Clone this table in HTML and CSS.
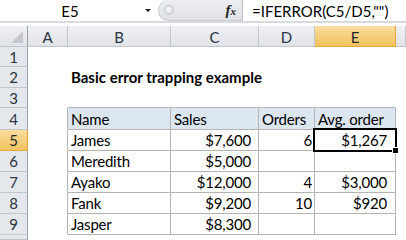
FILE: index.html
```html
<!DOCTYPE html>
<html lang="en">
<head>
    <meta charset="UTF-8">
    <meta name="viewport" content="width=device-width, initial-scale=1.0">
    <title>Basic error trapping example</title>
    <link rel="stylesheet" href="styles.css">
</head>
<body>
    <!-- Name box + formula bar -->
    <div class="formula-bar">
        <div class="name-box">
            <span class="cell-ref">E5</span>
            <span class="caret"></span>
        </div>
        <div class="fx-area">
            <span class="grip"></span>
            <span class="fx"><i>f</i><i class="x">x</i></span>
        </div>
        <div class="formula">=IFERROR(C5/D5,"")</div>
    </div>
    <div class="bar-gap"></div>

    <!-- Worksheet grid -->
    <div class="sheet">
        <div class="hd corner"><span class="corner-mark"></span></div>
        <div class="hd col">A</div>
        <div class="hd col">B</div>
        <div class="hd col">C</div>
        <div class="hd col">D</div>
        <div class="hd col sel">E</div>
        <div class="hd col"></div>

        <div class="hd row">1</div>
        <div class="c"></div><div class="c"></div><div class="c"></div><div class="c"></div><div class="c"></div><div class="c"></div>

        <div class="hd row">2</div>
        <div class="c"></div>
        <div class="c title">Basic error trapping example</div>
        <div class="c"></div><div class="c"></div><div class="c"></div><div class="c"></div>

        <div class="hd row">3</div>
        <div class="c"></div>
        <div class="c tt"></div><div class="c tt"></div><div class="c tt"></div><div class="c tt"></div>
        <div class="c"></div>

        <div class="hd row">4</div>
        <div class="c tl"></div>
        <div class="c t th">Name</div>
        <div class="c t th">Sales</div>
        <div class="c t th">Orders</div>
        <div class="c t th">Avg. order</div>
        <div class="c"></div>

        <div class="hd row sel">5</div>
        <div class="c tl"></div>
        <div class="c t">James</div>
        <div class="c t num money">$7,600</div>
        <div class="c t num">6</div>
        <div class="c t num avg active">$1,267</div>
        <div class="c"></div>

        <div class="hd row">6</div>
        <div class="c tl"></div>
        <div class="c t">Meredith</div>
        <div class="c t num money">$5,000</div>
        <div class="c t num"></div>
        <div class="c t num avg"></div>
        <div class="c"></div>

        <div class="hd row">7</div>
        <div class="c tl"></div>
        <div class="c t">Ayako</div>
        <div class="c t num money">$12,000</div>
        <div class="c t num">4</div>
        <div class="c t num avg">$3,000</div>
        <div class="c"></div>

        <div class="hd row">8</div>
        <div class="c tl"></div>
        <div class="c t">Fank</div>
        <div class="c t num money">$9,200</div>
        <div class="c t num">10</div>
        <div class="c t num avg">$920</div>
        <div class="c"></div>

        <div class="hd row">9</div>
        <div class="c tl"></div>
        <div class="c t">Jasper</div>
        <div class="c t num money">$8,300</div>
        <div class="c t num"></div>
        <div class="c t num avg"></div>
        <div class="c"></div>

        <!-- row 10 is only a sliver at the bottom edge -->
        <div class="hd row"></div>
        <div class="c"></div><div class="c"></div><div class="c"></div><div class="c"></div><div class="c"></div><div class="c"></div>
    </div>
</body>
</html>
```

FILE: styles.css
```css
body {
    margin: 0;
    width: 406px;
    height: 240px;
    overflow: hidden;
    background: #fff;
    font-family: Lato, "Liberation Sans", sans-serif;
    font-size: 15px;
    color: #000;
}

/* formula bar */
.formula-bar {
    display: flex;
    height: 21px;
    background: #fff;
}
.name-box {
    width: 158px;
    display: flex;
    align-items: center;
    position: relative;
}
.cell-ref {
    width: 140px;
    text-align: center;
}
.caret {
    width: 0;
    height: 0;
    border-left: 3px solid transparent;
    border-right: 3px solid transparent;
    border-top: 3px solid #222;
    margin-left: 5px;
}
.fx-area {
    width: 85px;
    display: flex;
    align-items: center;
    justify-content: space-between;
    background: linear-gradient(#eceef1, #dfe2e6);
    border-radius: 10px 0 0 10px;
    border: 1px solid #c9ccd1;
    border-top: none;
    border-right: 1px solid #b9bdc3;
    box-sizing: border-box;
}
.grip {
    width: 8px;
    height: 8px;
    margin-left: 5px;
    border-radius: 50%;
    background: radial-gradient(circle at 40% 40%, #fafafa, #d0d3d8);
    border: 1px solid #c4c7cc;
}
.fx {
    font-family: "Liberation Serif", serif;
    font-weight: bold;
    font-size: 15px;
    margin-right: 6px;
    color: #222;
}
.fx .x {
    font-size: 11px;
}
.formula {
    flex: 1;
    padding-left: 9px;
    display: flex;
    align-items: center;
}
.bar-gap {
    height: 2px;
    margin-bottom: 3px;
    background: #d7dadf;
}

/* worksheet */
.sheet {
    display: grid;
    grid-template-columns: 28px 40px 103px 88px 56px 81px 10px;
    grid-template-rows: 21px 20px 21px 20px 22px 21px 21px 21px 21px 21px 5px;
}
.hd {
    box-sizing: border-box;
    display: flex;
    align-items: center;
    justify-content: center;
    color: #2b3442;
    border-right: 1px solid #c2c7ce;
    border-bottom: 1px solid #c2c7ce;
    overflow: hidden;
}
.hd.col {
    background: linear-gradient(#eef0f3, #e0e3e8);
    padding-top: 1px;
}
.hd.row {
    background: #e4e7eb;
    border-right-color: #9aa1ab;
}
.hd.corner {
    background: linear-gradient(#eef0f3, #e0e3e8);
    border-right-color: #9aa1ab;
    position: relative;
}
.corner-mark {
    position: absolute;
    right: 4px;
    bottom: 3px;
    width: 12px;
    height: 12px;
    background: #c4c8ce;
    clip-path: polygon(100% 0, 100% 100%, 0 100%);
}
.hd.sel {
    background: linear-gradient(#f9dc9e, #f2c360);
    border-color: #e2a83c;
    color: #1f2630;
}
.hd.row.sel {
    border-right-color: #e2a83c;
}

.c {
    box-sizing: border-box;
    display: flex;
    align-items: flex-end;
    padding: 0 3px 1px;
    white-space: nowrap;
    letter-spacing: -0.2px;
    border-right: 1px solid transparent;
    border-bottom: 1px solid transparent;
}
.title {
    font-weight: bold;
    letter-spacing: 0;
    overflow: visible;
}
/* data table B4:E9 */
.t {
    border-right-color: #b4b4b4;
    border-bottom-color: #b4b4b4;
}
.tl {
    border-right-color: #b4b4b4;
}
.tt {
    border-bottom-color: #b4b4b4;
}
.th {
    background: #dce6f1;
}
.num {
    justify-content: flex-end;
    padding-right: 2px;
}
.money {
    padding-right: 7px;
}
.avg {
    padding-right: 8px;
}
.active {
    position: relative;
}
.active::after {
    content: "";
    position: absolute;
    left: -2px;
    top: -2px;
    right: -2px;
    bottom: -2px;
    border: 2px solid #000;
}
.active::before {
    content: "";
    position: absolute;
    right: -4px;
    bottom: -4px;
    width: 5px;
    height: 5px;
    background: #000;
    border: 1px solid #fff;
    z-index: 1;
}
```
